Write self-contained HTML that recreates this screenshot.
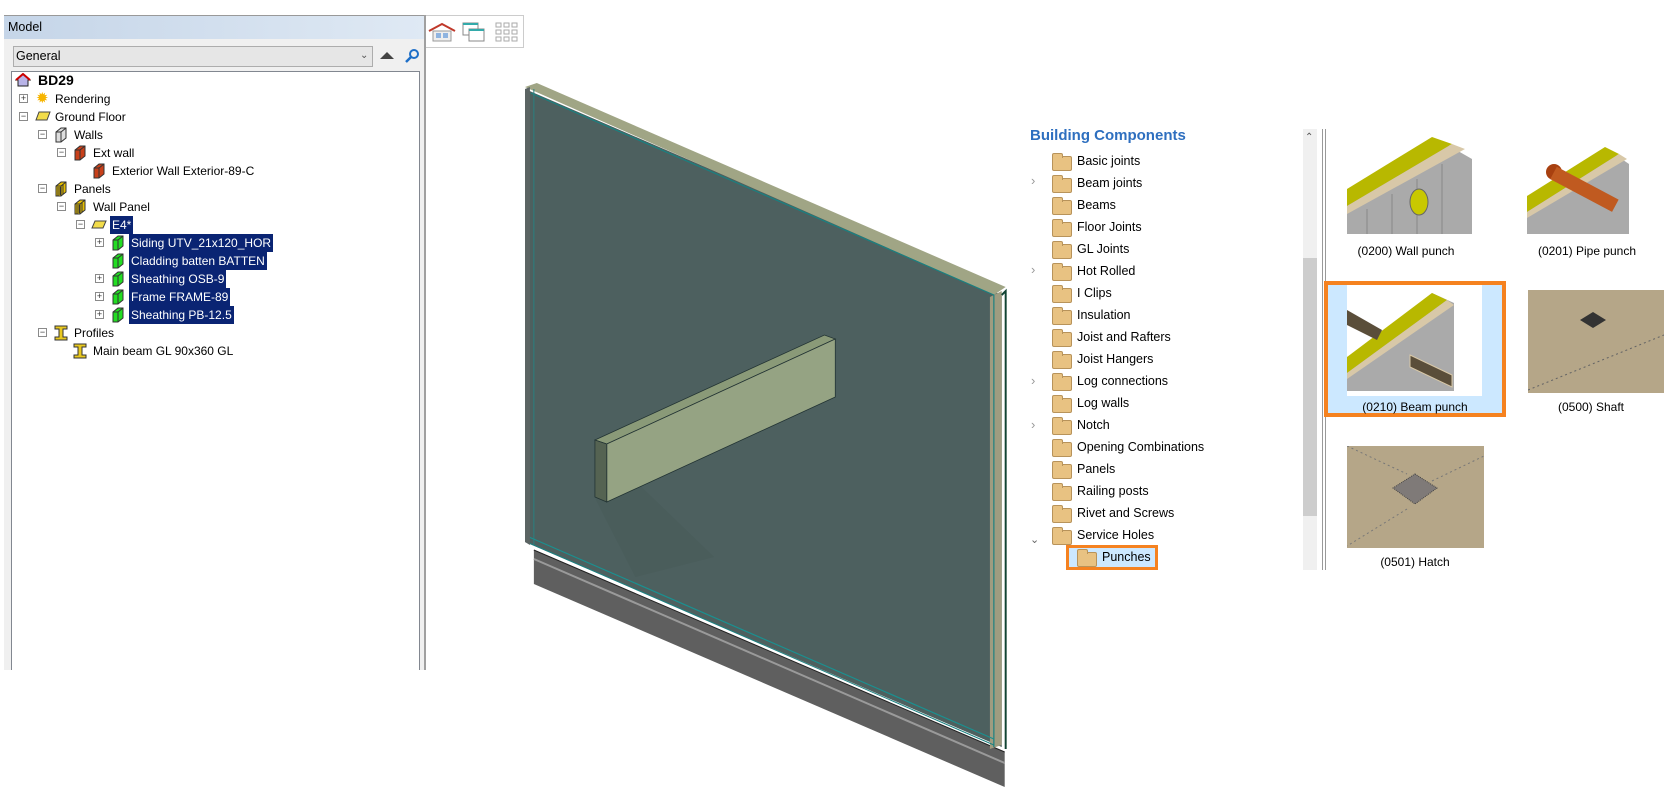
<!DOCTYPE html>
<html><head><meta charset="utf-8"><style>
*{margin:0;padding:0;box-sizing:border-box}
body{width:1675px;height:798px;background:#fff;position:relative;overflow:hidden;font-family:"Liberation Sans",sans-serif;font-size:12px;color:#000}
.a{position:absolute}
.row{position:absolute;height:18px;line-height:18px;white-space:nowrap}
.sel{background:#0a2473;color:#fff;padding:0 2px}
.pm{position:absolute;width:9px;height:9px;border:1px solid #8a8a8a;background:#fff;font-size:9px;line-height:7px;text-align:center;color:#333}
.it{position:absolute;height:22px;line-height:22px;font-size:12.5px;white-space:nowrap}
.fold{position:absolute;width:20px;height:15px;background:#e8c282;border:1px solid #b8935a;border-radius:2px}
.fold:before{content:"";position:absolute;left:-1px;top:-4px;width:9px;height:4px;background:#e8c282;border:1px solid #b8935a;border-bottom:none;border-radius:2px 2px 0 0}
.chev{position:absolute;color:#999;font-size:13px}
.lbl{position:absolute;font-size:12px;color:#000;text-align:center;width:170px}
#rp{position:absolute;left:-6px;top:0;width:1675px;height:798px}
</style></head><body>

<!-- Model panel -->
<div class="a" style="left:4px;top:15px;width:422px;height:655px;background:#f0f0f0;border-top:1px solid #999"></div>
<div class="a" style="left:4px;top:16px;width:420px;height:23px;background:linear-gradient(90deg,#c5d5e8,#dfe9f4);"></div>
<div class="a" style="left:8px;top:18px;font-size:12.5px;line-height:18px">Model</div>
<div class="a" style="left:13px;top:46px;width:360px;height:21px;background:#e6e6e6;border:1px solid #adadad"></div>
<div class="a" style="left:16px;top:48px;line-height:17px;font-size:12.5px">General</div>
<div class="a" style="left:360px;top:50px;font-size:10px;color:#555">&#8964;</div>
<div class="a" style="left:380px;top:52px;width:0;height:0;border-left:7px solid transparent;border-right:7px solid transparent;border-bottom:7px solid #444"></div>
<svg class="a" style="left:404px;top:48px" width="16" height="16"><circle cx="10" cy="6" r="4" fill="none" stroke="#1e6fc8" stroke-width="2"/><line x1="7" y1="9" x2="2" y2="14" stroke="#1e6fc8" stroke-width="2.5"/></svg>
<div class="a" style="left:11px;top:71px;width:409px;height:599px;background:#fff;border:1px solid #828790;border-bottom:none"></div>
<div class="a" style="left:424px;top:15px;width:2px;height:655px;background:#a0a0a0"></div>

<!-- tree -->
<svg class="a" style="left:15px;top:73px" width="16" height="14"><path d="M1 7 L8 1 L15 7 L13 7 L13 13 L3 13 L3 7Z" fill="#b9b4e8" stroke="#222"/><path d="M1 7 L8 1 L15 7" fill="none" stroke="#c00" stroke-width="2"/></svg>
<div class="row" style="left:38px;top:71px;font-weight:bold;font-size:14px">BD29</div>

<div class="pm" style="left:19px;top:94px">+</div>
<div class="a" style="left:36px;top:91px;color:#f7b500;font-size:15px;line-height:15px">&#10041;</div>
<div class="row" style="left:55px;top:90px">Rendering</div>

<div class="pm" style="left:19px;top:112px">&#8722;</div>
<svg class="a" style="left:35px;top:111px" width="16" height="10"><path d="M4 1 L15 1 L12 9 L1 9Z" fill="#f2dc4a" stroke="#444"/></svg>
<div class="row" style="left:55px;top:108px">Ground Floor</div>

<div class="pm" style="left:38px;top:130px">&#8722;</div>
<svg class="a" style="left:55px;top:127px" width="12" height="16"><path d="M1 5 L6 1 L11 1 L11 11 L6 15 L1 15Z" fill="#ddd" stroke="#333"/><path d="M1 5 L6 5 L6 15 M6 5 L11 1" fill="none" stroke="#333"/></svg>
<div class="row" style="left:74px;top:126px">Walls</div>

<div class="pm" style="left:57px;top:148px">&#8722;</div>
<svg class="a" style="left:74px;top:145px" width="12" height="16"><path d="M1 5 L6 1 L11 1 L11 11 L6 15 L1 15Z" fill="#c8401a" stroke="#333"/><path d="M1 5 L6 5 L6 15 M6 5 L11 1" fill="none" stroke="#333"/></svg>
<div class="row" style="left:93px;top:144px">Ext wall</div>

<svg class="a" style="left:93px;top:163px" width="12" height="16"><path d="M1 5 L6 1 L11 1 L11 11 L6 15 L1 15Z" fill="#c8401a" stroke="#333"/><path d="M1 5 L6 5 L6 15 M6 5 L11 1" fill="none" stroke="#333"/></svg>
<div class="row" style="left:112px;top:162px">Exterior Wall Exterior-89-C</div>

<div class="pm" style="left:38px;top:184px">&#8722;</div>
<svg class="a" style="left:55px;top:181px" width="12" height="16"><path d="M1 5 L6 1 L11 1 L11 11 L6 15 L1 15Z" fill="#e8c000" stroke="#333"/><path d="M1 5 L6 5 L6 15 M6 5 L11 1 M3 6 V15 M5 6 V14 M8 3 V13" fill="none" stroke="#333"/></svg>
<div class="row" style="left:74px;top:180px">Panels</div>

<div class="pm" style="left:57px;top:202px">&#8722;</div>
<svg class="a" style="left:74px;top:199px" width="12" height="16"><path d="M1 5 L6 1 L11 1 L11 11 L6 15 L1 15Z" fill="#e8c000" stroke="#333"/><path d="M1 5 L6 5 L6 15 M6 5 L11 1 M3 6 V15 M5 6 V14 M8 3 V13" fill="none" stroke="#333"/></svg>
<div class="row" style="left:93px;top:198px">Wall Panel</div>

<div class="pm" style="left:76px;top:220px">&#8722;</div>
<svg class="a" style="left:91px;top:220px" width="16" height="9"><path d="M4 1 L15 1 L12 8 L1 8Z" fill="#f2dc4a" stroke="#444"/></svg>
<div class="row sel" style="left:110px;top:216px">E4*</div>

<div class="pm" style="left:95px;top:238px">+</div>
<svg class="a" style="left:112px;top:235px" width="12" height="16"><path d="M1 5 L6 1 L11 1 L11 11 L6 15 L1 15Z" fill="#22dd22" stroke="#333"/><path d="M1 5 L6 5 L6 15 M6 5 L11 1" fill="none" stroke="#333"/></svg>
<div class="row sel" style="left:129px;top:234px">Siding UTV_21x120_HOR</div>

<svg class="a" style="left:112px;top:253px" width="12" height="16"><path d="M1 5 L6 1 L11 1 L11 11 L6 15 L1 15Z" fill="#22dd22" stroke="#333"/><path d="M1 5 L6 5 L6 15 M6 5 L11 1" fill="none" stroke="#333"/></svg>
<div class="row sel" style="left:129px;top:252px">Cladding batten BATTEN</div>

<div class="pm" style="left:95px;top:274px">+</div>
<svg class="a" style="left:112px;top:271px" width="12" height="16"><path d="M1 5 L6 1 L11 1 L11 11 L6 15 L1 15Z" fill="#22dd22" stroke="#333"/><path d="M1 5 L6 5 L6 15 M6 5 L11 1" fill="none" stroke="#333"/></svg>
<div class="row sel" style="left:129px;top:270px">Sheathing OSB-9</div>

<div class="pm" style="left:95px;top:292px">+</div>
<svg class="a" style="left:112px;top:289px" width="12" height="16"><path d="M1 5 L6 1 L11 1 L11 11 L6 15 L1 15Z" fill="#22dd22" stroke="#333"/><path d="M1 5 L6 5 L6 15 M6 5 L11 1" fill="none" stroke="#333"/></svg>
<div class="row sel" style="left:129px;top:288px">Frame FRAME-89</div>

<div class="pm" style="left:95px;top:310px">+</div>
<svg class="a" style="left:112px;top:307px" width="12" height="16"><path d="M1 5 L6 1 L11 1 L11 11 L6 15 L1 15Z" fill="#22dd22" stroke="#333"/><path d="M1 5 L6 5 L6 15 M6 5 L11 1" fill="none" stroke="#333"/></svg>
<div class="row sel" style="left:129px;top:306px">Sheathing PB-12.5</div>

<div class="pm" style="left:38px;top:328px">&#8722;</div>
<svg class="a" style="left:54px;top:325px" width="15" height="16"><path d="M1 1 H13 V4 H9 V12 H13 V15 H1 V12 H5 V4 H1Z" fill="#e8c820" stroke="#333"/></svg>
<div class="row" style="left:74px;top:324px">Profiles</div>
<svg class="a" style="left:73px;top:343px" width="15" height="16"><path d="M1 1 H13 V4 H9 V12 H13 V15 H1 V12 H5 V4 H1Z" fill="#e8c820" stroke="#333"/></svg>
<div class="row" style="left:93px;top:342px">Main beam GL 90x360 GL</div>

<!-- toolbar -->
<div class="a" style="left:426px;top:15px;width:98px;height:33px;border:1px solid #ccc;border-left:none;background:#fff"></div>
<svg class="a" style="left:427px;top:22px" width="30" height="20"><path d="M2 9 L15 2 L28 9" fill="none" stroke="#c0392b" stroke-width="2"/><rect x="6" y="9" width="18" height="10" fill="#eee" stroke="#999"/><rect x="9" y="11" width="5" height="5" fill="#8fb4e0"/><rect x="16" y="11" width="5" height="5" fill="#8fb4e0"/></svg>
<svg class="a" style="left:462px;top:22px" width="24" height="20"><rect x="1" y="1" width="15" height="12" fill="#fff" stroke="#888"/><rect x="1" y="1" width="15" height="2" fill="#3aa"/><rect x="7" y="7" width="15" height="12" fill="#fff" stroke="#888"/><rect x="7" y="7" width="15" height="2" fill="#3aa"/></svg>
<svg class="a" style="left:495px;top:22px" width="24" height="20"><g fill="none" stroke="#aaa"><rect x="1" y="1" width="5" height="4"/><rect x="9" y="1" width="5" height="4"/><rect x="17" y="1" width="5" height="4"/><rect x="1" y="8" width="5" height="4"/><rect x="9" y="8" width="5" height="4"/><rect x="17" y="8" width="5" height="4"/><rect x="1" y="15" width="5" height="4"/><rect x="9" y="15" width="5" height="4"/><rect x="17" y="15" width="5" height="4"/></g></svg>

<!-- 3D wall -->
<svg class="a" style="left:0;top:0" width="1040" height="798">
<g transform="translate(525,-3) scale(0.985,1) translate(-528,0)">
<polygon points="537,553 1015,755 1015,790 537,587" fill="#5f5f5f"/>
<line x1="537" y1="562" x2="1015" y2="766" stroke="#9a9a9a" stroke-width="2"/>
<line x1="537" y1="553" x2="1015" y2="755" stroke="#222" stroke-width="1"/>
<polygon points="528,92 1012,298 1012,750 528,545" fill="#4d605f"/>
<polygon points="528,90 540,86 1016,290 1004,298" fill="#a0a585"/>
<polygon points="1000,300 1012,294 1012,748 1000,752" fill="#9e9c80"/>
<polyline points="534,96 1004,298 1004,750" fill="none" stroke="#1a8080" stroke-width="1.2"/>
<line x1="537" y1="92" x2="537" y2="548" stroke="#2a8080"/>
<line x1="532" y1="540" x2="1004" y2="742" stroke="#1a9090" stroke-width="1.2"/>
<line x1="532" y1="546" x2="1004" y2="748" stroke="#1a8080" stroke-width="1"/>
<polyline points="1012,298 1016,294 1016,752" fill="none" stroke="#143" stroke-width="2"/>
<polygon points="528,92 533,90 533,548 528,545" fill="#5b6463"/>
<polygon points="600,446 720,560 640,580 600,503" fill="#475957" opacity="0.5"/>
<polygon points="599,443 832,338 843,342 611,447" fill="#8a9a78" stroke="#233" stroke-width="0.8"/>
<polygon points="611,447 843,342 843,400 611,505" fill="#95a383" stroke="#233" stroke-width="0.8"/>
<polygon points="599,443 611,447 611,505 599,500" fill="#556352" stroke="#233" stroke-width="0.8"/>
</g>
</svg>

<div id="rp">
<!-- Building components -->
<div class="a" style="left:1036px;top:127px;font-size:15px;font-weight:bold;color:#2e6fbf">Building Components</div>
<div class="chev" style="left:1037px;top:173px">&#8250;</div>
<div class="chev" style="left:1037px;top:262px">&#8250;</div>
<div class="chev" style="left:1037px;top:373px">&#8250;</div>
<div class="chev" style="left:1037px;top:417px">&#8250;</div>
<div class="a" style="left:1036px;top:533px;color:#666;font-size:11px">&#8964;</div>
<div class="fold" style="left:1058px;top:156px"></div><div class="it" style="left:1083px;top:150px">Basic joints</div>
<div class="fold" style="left:1058px;top:178px"></div><div class="it" style="left:1083px;top:172px">Beam joints</div>
<div class="fold" style="left:1058px;top:200px"></div><div class="it" style="left:1083px;top:194px">Beams</div>
<div class="fold" style="left:1058px;top:222px"></div><div class="it" style="left:1083px;top:216px">Floor Joints</div>
<div class="fold" style="left:1058px;top:244px"></div><div class="it" style="left:1083px;top:238px">GL Joints</div>
<div class="fold" style="left:1058px;top:266px"></div><div class="it" style="left:1083px;top:260px">Hot Rolled</div>
<div class="fold" style="left:1058px;top:288px"></div><div class="it" style="left:1083px;top:282px">I Clips</div>
<div class="fold" style="left:1058px;top:310px"></div><div class="it" style="left:1083px;top:304px">Insulation</div>
<div class="fold" style="left:1058px;top:332px"></div><div class="it" style="left:1083px;top:326px">Joist and Rafters</div>
<div class="fold" style="left:1058px;top:354px"></div><div class="it" style="left:1083px;top:348px">Joist Hangers</div>
<div class="fold" style="left:1058px;top:376px"></div><div class="it" style="left:1083px;top:370px">Log connections</div>
<div class="fold" style="left:1058px;top:398px"></div><div class="it" style="left:1083px;top:392px">Log walls</div>
<div class="fold" style="left:1058px;top:420px"></div><div class="it" style="left:1083px;top:414px">Notch</div>
<div class="fold" style="left:1058px;top:442px"></div><div class="it" style="left:1083px;top:436px">Opening Combinations</div>
<div class="fold" style="left:1058px;top:464px"></div><div class="it" style="left:1083px;top:458px">Panels</div>
<div class="fold" style="left:1058px;top:486px"></div><div class="it" style="left:1083px;top:480px">Railing posts</div>
<div class="fold" style="left:1058px;top:508px"></div><div class="it" style="left:1083px;top:502px">Rivet and Screws</div>
<div class="fold" style="left:1058px;top:530px"></div><div class="it" style="left:1083px;top:524px">Service Holes</div>
<div class="a" style="left:1072px;top:545px;width:92px;height:25px;border:3px solid #f58220;background:#cce8ff"></div>
<div class="fold" style="left:1083px;top:552px"></div><div class="it" style="left:1108px;top:546px">Punches</div>

<!-- scrollbar -->
<div class="a" style="left:1309px;top:129px;width:14px;height:441px;background:#f0f0f0"></div>
<div class="a" style="left:1309px;top:258px;width:14px;height:258px;background:#cdcdcd"></div>
<div class="a" style="left:1311px;top:132px;font-size:10px;color:#555">&#8963;</div>
<div class="a" style="left:1328px;top:129px;width:1px;height:441px;background:#999"></div>
<div class="a" style="left:1331px;top:129px;width:1px;height:441px;background:#999"></div>

<!-- thumbnails -->
<svg class="a" style="left:1353px;top:134px" width="125" height="100"><polygon points="0,60 90,5 125,25 125,100 0,100" fill="#aaa"/><polygon points="0,55 85,3 105,10 0,72" fill="#b8b800"/><polygon points="0,72 105,10 118,15 0,80" fill="#d8c8a8"/><g stroke="#888"><line x1="20" y1="75" x2="20" y2="100"/><line x1="45" y1="60" x2="45" y2="100"/><line x1="70" y1="45" x2="70" y2="100"/><line x1="95" y1="30" x2="95" y2="100"/></g><ellipse cx="72" cy="68" rx="9" ry="13" fill="#c8c800" stroke="#666"/></svg>
<div class="lbl" style="left:1327px;top:244px">(0200) Wall punch</div>
<svg class="a" style="left:1533px;top:134px" width="102" height="100"><polygon points="0,65 80,15 102,30 102,100 0,100" fill="#aaa"/><polygon points="0,62 78,13 92,20 0,78" fill="#b8b800"/><polygon points="0,78 92,20 100,25 0,84" fill="#d8c8a8"/><circle cx="27" cy="38" r="8" fill="#a84010"/><rect x="27" y="32" width="70" height="14" fill="#c05a20" transform="rotate(28 27 38)"/></svg>
<div class="lbl" style="left:1508px;top:244px">(0201) Pipe punch</div>

<div class="a" style="left:1330px;top:281px;width:182px;height:136px;border:4px solid #f58220;background:#cce8ff"></div>
<svg class="a" style="left:1353px;top:285px" width="135" height="111"><rect width="135" height="111" fill="#fff"/><polygon points="0,75 85,8 107,18 107,106 0,106" fill="#aaa"/><polygon points="0,72 85,8 100,15 0,88" fill="#b8b800"/><polygon points="0,88 100,15 107,20 0,94" fill="#d8c8a8"/><polygon points="0,25 35,45 30,55 0,40" fill="#5a4e3a"/><polygon points="63,70 105,90 105,102 63,82" fill="#5a4e3a" stroke="#d8c8a8"/></svg>
<div class="lbl" style="left:1336px;top:400px">(0210) Beam punch</div>
<svg class="a" style="left:1534px;top:290px" width="136" height="103"><rect width="136" height="103" fill="#b5a688"/><polygon points="65,22 78,30 65,38 52,30" fill="#333"/><line x1="0" y1="100" x2="136" y2="45" stroke="#666" stroke-dasharray="2 3"/></svg>
<div class="lbl" style="left:1512px;top:400px">(0500) Shaft</div>
<svg class="a" style="left:1353px;top:446px" width="137" height="102"><rect width="137" height="102" fill="#b5a688"/><polygon points="68,28 90,42 68,58 46,42" fill="#7f7a78" stroke="#444" stroke-dasharray="1 1"/><line x1="0" y1="0" x2="60" y2="28" stroke="#777" stroke-dasharray="2 3"/><line x1="60" y1="63" x2="0" y2="100" stroke="#777" stroke-dasharray="2 3"/><line x1="85" y1="35" x2="137" y2="10" stroke="#777" stroke-dasharray="2 3"/></svg>
<div class="lbl" style="left:1336px;top:555px">(0501) Hatch</div>
</div>
</body></html>
